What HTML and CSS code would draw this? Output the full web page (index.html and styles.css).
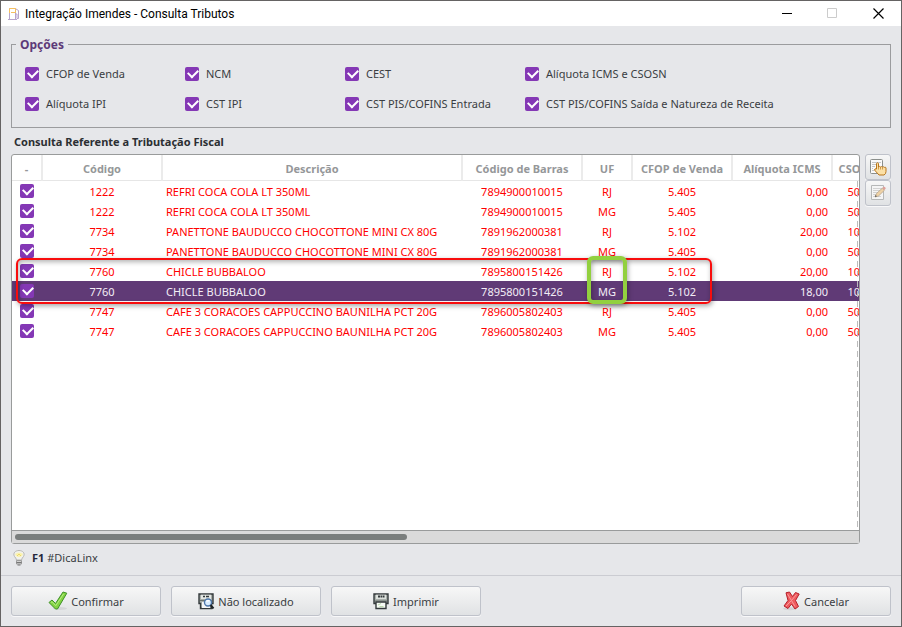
FILE: index.html
```html
<!DOCTYPE html>
<html lang="pt-BR">
<head>
    <meta charset="UTF-8">
    <meta name="viewport" content="width=device-width, initial-scale=1.0">
    <title>Integração Imendes - Consulta Tributos</title>
    <link rel="stylesheet" href="styles.css">
</head>
<body>
    <div class="window">
        <header class="titlebar">
            <svg class="app-icon" width="12" height="14" viewBox="0 0 12 14" fill="none">
                <path d="M1.500 12V1.500H7.500V12" stroke="#b7a5cc"/>
                <path d="M1.500 6V1.500H7.500V5.500H3" stroke="#f5c060"/>
                <path d="M0 12.500h9M8 2l2.500 1.500v8H9V7H8" stroke="#b7a5cc"/>
            </svg>
            <h1 class="title">Integração Imendes - Consulta Tributos</h1>
            <button class="win-btn" aria-label="Minimizar">
                <svg width="11" height="11" viewBox="0 0 11 11"><path d="M1 5.500h10" stroke="#000"/></svg>
            </button>
            <button class="win-btn" aria-label="Maximizar" disabled>
                <svg width="11" height="11" viewBox="0 0 11 11"><path d="M.5.500h9v9h-9z" fill="none" stroke="#ccc"/></svg>
            </button>
            <button class="win-btn" aria-label="Fechar">
                <svg width="11" height="11" viewBox="0 0 11 11"><path d="M.5.500l10 10M10.500.500l-10 10" stroke="#000" stroke-width="1.200"/></svg>
            </button>
        </header>

        <main class="content">
            <fieldset class="options">
                <legend>Opções</legend>
                <div class="options-grid">
                    <label><input type="checkbox" class="check" checked>CFOP de Venda</label>
                    <label><input type="checkbox" class="check" checked>NCM</label>
                    <label><input type="checkbox" class="check" checked>CEST</label>
                    <label><input type="checkbox" class="check" checked>Alíquota ICMS e CSOSN</label>
                    <label><input type="checkbox" class="check" checked>Alíquota IPI</label>
                    <label><input type="checkbox" class="check" checked>CST IPI</label>
                    <label><input type="checkbox" class="check" checked>CST PIS/COFINS Entrada</label>
                    <label><input type="checkbox" class="check" checked>CST PIS/COFINS Saída e Natureza de Receita</label>
                </div>
            </fieldset>

            <h2 class="section-title">Consulta Referente a Tributação Fiscal</h2>

            <div class="grid-area">
                <div class="grid-box">
                    <div class="grid-view">
                        <table class="grid">
                            <colgroup>
                                <col class="w30"><col class="w120"><col class="w300"><col class="w120">
                                <col class="w50"><col class="w100"><col class="w100"><col class="w50">
                            </colgroup>
                            <thead>
                                <tr><th>-</th><th>Código</th><th>Descrição</th><th>Código de Barras</th><th>UF</th><th>CFOP de Venda</th><th>Alíquota ICMS</th><th>CSOSN</th></tr>
                            </thead>
                            <tbody>
                                <tr><td><input type="checkbox" class="check" aria-label="Selecionar" checked></td><td>1222</td><td class="left">REFRI COCA COLA LT 350ML</td><td>7894900010015</td><td>RJ</td><td>5.405</td><td class="right">0,00</td><td>500</td></tr>
                                <tr><td><input type="checkbox" class="check" aria-label="Selecionar" checked></td><td>1222</td><td class="left">REFRI COCA COLA LT 350ML</td><td>7894900010015</td><td>MG</td><td>5.405</td><td class="right">0,00</td><td>500</td></tr>
                                <tr><td><input type="checkbox" class="check" aria-label="Selecionar" checked></td><td>7734</td><td class="left">PANETTONE BAUDUCCO CHOCOTTONE MINI CX 80G</td><td>7891962000381</td><td>RJ</td><td>5.102</td><td class="right">20,00</td><td>102</td></tr>
                                <tr><td><input type="checkbox" class="check" aria-label="Selecionar" checked></td><td>7734</td><td class="left">PANETTONE BAUDUCCO CHOCOTTONE MINI CX 80G</td><td>7891962000381</td><td>MG</td><td>5.405</td><td class="right">0,00</td><td>500</td></tr>
                                <tr><td><input type="checkbox" class="check" aria-label="Selecionar" checked></td><td>7760</td><td class="left">CHICLE BUBBALOO</td><td>7895800151426</td><td>RJ</td><td>5.102</td><td class="right">20,00</td><td>102</td></tr>
                                <tr class="selected"><td><input type="checkbox" class="check" aria-label="Selecionar" checked></td><td>7760</td><td class="left">CHICLE BUBBALOO</td><td>7895800151426</td><td>MG</td><td>5.102</td><td class="right">18,00</td><td>102</td></tr>
                                <tr><td><input type="checkbox" class="check" aria-label="Selecionar" checked></td><td>7747</td><td class="left">CAFE 3 CORACOES CAPPUCCINO BAUNILHA PCT 20G</td><td>7896005802403</td><td>RJ</td><td>5.405</td><td class="right">0,00</td><td>500</td></tr>
                                <tr><td><input type="checkbox" class="check" aria-label="Selecionar" checked></td><td>7747</td><td class="left">CAFE 3 CORACOES CAPPUCCINO BAUNILHA PCT 20G</td><td>7896005802403</td><td>MG</td><td>5.405</td><td class="right">0,00</td><td>500</td></tr>
                            </tbody>
                        </table>
                        <div class="edge-line"></div>
                    </div>
                    <div class="scrollbar"><div class="thumb"></div></div>
                    <div class="mark mark-red"></div>
                    <div class="mark mark-green"></div>
                </div>

                <div class="side-buttons">
                    <button class="btn side-btn" aria-label="Selecionar registro">
                        <svg width="18" height="18" viewBox="0 0 18 18">
                            <rect x="1.500" y="1.500" width="12" height="14" rx="1" fill="#fafafa" stroke="#8b8f8c"/>
                            <path d="M3 4.500h9M3 6.500h4M3 8.500h3M3 10.500h1M3 12.500h2" stroke="#c5c5c5"/>
                            <path d="M7.500 11V5.500q1-1.500 2 0V9q1-1.200 2 0 1-1 2 .2 1-.9 2 .2 1.300-.6 1.500.6v3.500q0 2.500-2 3.500H10L5.500 12q0-1.800 2-1z" fill="#fbe0a6" stroke="#b9761b"/>
                            <path d="M9.500 9v2.500M11.500 9v2.500M13.500 9.500v2" stroke="#c98a30" stroke-width=".8"/>
                        </svg>
                    </button>
                    <button class="btn side-btn" aria-label="Editar registro">
                        <svg width="18" height="18" viewBox="0 0 18 18">
                            <path d="M2.500 1.500h12v14h-12z" fill="#f5f5f5" stroke="#b6b8b8"/>
                            <path d="M4 4.500h9M4 6.500h7M4 8.500h5M4 10.500h3M4 12.500h8" stroke="#d2d2d2"/>
                            <path d="M6 13l1.500-3.500L13.500 4l2 2.200L9.500 12z" fill="#efd2a5" stroke="#b5a58e" stroke-width=".8"/>
                            <path d="M13.300 4l1.500-1.300q1.500-.2 2 1.500L15.500 6z" fill="#e0a09a"/>
                            <path d="M6 13l.5-2 1.500 1.200z" fill="#555"/>
                        </svg>
                    </button>
                </div>
            </div>

            <div class="tip">
                <svg width="12" height="16" viewBox="0 0 12 16">
                    <path d="M3.500 10Q3 8 1.500 6.500C-.5 3 2.500.500 6 .500s6.500 2.500 4.500 6Q9 8 8.500 10z" fill="#f1f1ec" stroke="#b7b7b4"/>
                    <path d="M2 4q4-3 8 0-1 3-4 3T2 4z" fill="#fbf3ae"/>
                    <path d="M4 6l2-2 2 2" fill="none" stroke="#ead66e"/>
                    <path d="M3.500 10.500h5v3.500h-5z" fill="#d2d2d2" stroke="#9c9c9c"/>
                    <path d="M3.500 12.500h5M4.500 15h3" stroke="#757575"/>
                </svg>
                <span><b>F1</b> #DicaLinx</span>
            </div>
        </main>

        <footer class="footer">
            <button class="btn">
                <svg width="20" height="20" viewBox="0 0 20 20">
                    <ellipse cx="12" cy="17.500" rx="7" ry="1.500" fill="#d5d6d8"/>
                    <path d="M1 11.500l3-2.500 3.500 3.500L15 1l3.800 1.200L9.500 18H7.500z" fill="#83d342" stroke="#3e9128" stroke-linejoin="round"/>
                    <path d="M3 11.500l1-.8 3.800 4L15.500 3" fill="none" stroke="#b5ec83"/>
                </svg>
                Confirmar
            </button>
            <button class="btn">
                <svg width="17" height="17" viewBox="0 0 17 17">
                    <path d="M1 1h14v9.500h-1.500v5h-11v-5H1z" fill="#a9afab" stroke="#33393b" stroke-width="1.400"/>
                    <path d="M3 1.700h10V6H3z" fill="#e3e7e4"/>
                    <path d="M5 3.500h2M8 3.500h3" stroke="#33393b" stroke-width="1.500"/>
                    <path d="M2 7.500h12" stroke="#6b726e"/>
                    <path d="M4 9h8v6H4z" fill="#f4f6f6"/>
                    <circle cx="10" cy="9.500" r="3.500" fill="#d9edff" stroke="#4f78ab" stroke-width="1.400"/>
                    <path d="M8.500 8.500q1-1.500 3-.5" fill="none" stroke="#fff" stroke-width="1.400"/>
                    <path d="M12.500 12l3 3.500" stroke="#1f2428" stroke-width="2"/>
                </svg>
                Não localizado
            </button>
            <button class="btn">
                <svg width="17" height="17" viewBox="0 0 17 17">
                    <path d="M1 1h14v9.500H1z" fill="#a9afab" stroke="#33393b" stroke-width="1.400"/>
                    <path d="M3 1.700h10V6H3z" fill="#dce1dd"/>
                    <path d="M5 3.500h2M7.500 3.500h1.500M9.500 3.500h2" stroke="#33393b" stroke-width="2"/>
                    <path d="M2 7.500h12" stroke="#8b938e"/>
                    <path d="M3 9h10v6.500H3z" fill="#f7fbf5" stroke="#33393b" stroke-width="1.400"/>
                    <path d="M5 12l3-1.500M6.500 13.500h4" stroke="#b9d9ac"/>
                </svg>
                Imprimir
            </button>
            <button class="btn btn-cancel">
                <svg width="18" height="20" viewBox="0 0 18 20">
                    <ellipse cx="7" cy="17.800" rx="7" ry="1.500" fill="#d2d3d5"/>
                    <path d="M3 1.800l3.500-.8 3 4.500L12.500 1.500l3.700 1.500-3.700 6.500 3 6-3.500 2.500-3.500-5-3.500 4.500L1 15l4-5.500z" fill="#ef5b5f" stroke="#b5212b" stroke-linejoin="round"/>
                    <path d="M4.500 3l4 6.500 3.500 6M13.500 3.500l-5 6-5.500 5.500" fill="none" stroke="#f99a9a"/>
                </svg>
                Cancelar
            </button>
        </footer>
    </div>
</body>
</html>
```

FILE: styles.css
```css
* {
    box-sizing: border-box;
}
body {
    margin: 0;
    font-family: "Noto Sans", "Open Sans", sans-serif;
    font-size: 11px;
    color: #3a3d42;
    background-color: #e6e7ea;
}
button {
    font: inherit;
    color: inherit;
}
svg {
    flex: none;
    display: block;
}
.window {
    display: flex;
    flex-direction: column;
    min-height: 100vh;
    border: 1px solid #656363;
}

/* Title bar */
.titlebar {
    display: flex;
    align-items: center;
    height: 25px;
    padding-left: 7px;
    background-color: #fff;
}
.title {
    flex: 1;
    margin: 0 0 0 5px;
    font-family: Roboto, "Open Sans", sans-serif;
    font-size: 12px;
    font-weight: normal;
    line-height: 24px;
    color: #000;
}
.win-btn {
    display: flex;
    align-items: center;
    justify-content: center;
    width: 46px;
    height: 25px;
    padding: 0;
    border: none;
    background: none;
}

/* Content */
.content {
    display: flex;
    flex: 1;
    flex-direction: column;
    padding: 10px 10px 8px;
}
.options {
    min-width: 0;
    margin: 0;
    padding: 11px 13px 13px;
    border: 1px solid #9b9c9e;
}
.options legend {
    margin-left: -9px;
    padding: 1px 4px 0;
    font-size: 12px;
    font-weight: bold;
    line-height: 16px;
    color: #5d3a78;
}
.options-grid {
    display: grid;
    grid-template-columns: 160px 160px 180px 1fr;
    row-gap: 10px;
}
.options-grid label {
    display: flex;
    align-items: center;
    gap: 7px;
    height: 20px;
    white-space: nowrap;
    line-height: 14px;
}
.check {
    appearance: none;
    display: block;
    flex: none;
    width: 14px;
    height: 14px;
    margin: 0;
    border-radius: 2px;
    background-color: #8438b5;
}
.check:checked::before {
    content: "";
    display: block;
    width: 8px;
    height: 5px;
    margin: 3px;
    border-left: 2px solid #fff;
    border-bottom: 2px solid #fff;
    transform: translateY(-1px) rotate(-45deg);
}
.section-title {
    margin: 4px 0 2px;
    padding-left: 3px;
    font-size: 11px;
    font-weight: bold;
    line-height: 20px;
    color: #2c2f33;
}

/* Grid */
.grid-area {
    display: flex;
    flex: 1;
    gap: 5px;
}
.grid-box {
    position: relative;
    display: flex;
    flex: 1;
    flex-direction: column;
    min-width: 0;
    border: 1px solid #999b9b;
    border-radius: 3px;
    background-color: #fff;
}
.grid-view {
    position: relative;
    flex: 1;
    overflow: hidden;
}
.grid {
    width: 870px;
    table-layout: fixed;
    border-collapse: separate;
    border-spacing: 0;
}
.w30 { width: 30px; }
.w50 { width: 50px; }
.w100 { width: 100px; }
.w120 { width: 120px; }
.w300 { width: 300px; }
.grid th {
    height: 26px;
    padding: 2px 0 0;
    border-left: 1px solid #ebebeb;
    border-right: 1px solid #ebebeb;
    border-bottom: 1px solid #e6e6e6;
    color: #959799;
}
.grid th:first-child {
    border-left: none;
}
.grid td {
    height: 20px;
    padding: 2px 0 0;
    line-height: 18px;
    text-align: center;
    white-space: nowrap;
    color: #f00;
}
.grid td:first-child {
    padding: 0 0 0 8px;
}
.grid td.left {
    padding-left: 4px;
    text-align: left;
}
.grid td.right {
    padding-right: 4px;
    text-align: right;
}
.grid tr.selected td {
    background-color: #603a76;
    color: #f3edf6;
}
/* Dashed line at the right edge of the view */
.edge-line {
    position: absolute;
    top: 26px;
    right: 1px;
    bottom: 0;
    width: 1px;
    background: repeating-linear-gradient(#bbb 0 6px, transparent 6px 10px);
}
.scrollbar {
    height: 13px;
    padding: 3px;
    border-top: 1px solid #999b9b;
    background-color: #dadada;
}
.thumb {
    width: 46.6%;
    height: 6px;
    border-radius: 3px;
    background-color: #7a7e7d;
}

/* Highlights over the rows */
.mark {
    position: absolute;
    border-radius: 6px;
    box-shadow: 1px 2px 5px rgba(0, 0, 0, 0.35), inset 1px 2px 5px rgba(0, 0, 0, 0.3);
}
.mark-red {
    top: 103px;
    left: 4px;
    width: 696px;
    height: 46px;
    border: 2px solid #f80d0d;
}
.mark-green {
    top: 101px;
    left: 575px;
    width: 40px;
    height: 48px;
    border: 4px solid #92d03f;
}

/* Buttons */
.btn {
    display: flex;
    align-items: center;
    justify-content: center;
    gap: 3px;
    width: 150px;
    height: 30px;
    padding: 0;
    border: 1px solid #bfc2ca;
    border-radius: 3px;
    background: linear-gradient(#f7f7f7, #e0e2e4);
    box-shadow: 0 1px 0 #f8f8f9;
}
.side-buttons {
    display: flex;
    flex-direction: column;
}
.side-btn {
    width: 26px;
    height: 26px;
}
.tip {
    display: flex;
    align-items: center;
    gap: 7px;
    margin-top: 4px;
    padding-left: 2px;
    line-height: 19px;
}
.tip b {
    color: #25283c;
}
.footer {
    display: flex;
    gap: 10px;
    padding: 10px;
    border-top: 1px solid #cbccd2;
}
.btn-cancel {
    margin-left: auto;
}
```
